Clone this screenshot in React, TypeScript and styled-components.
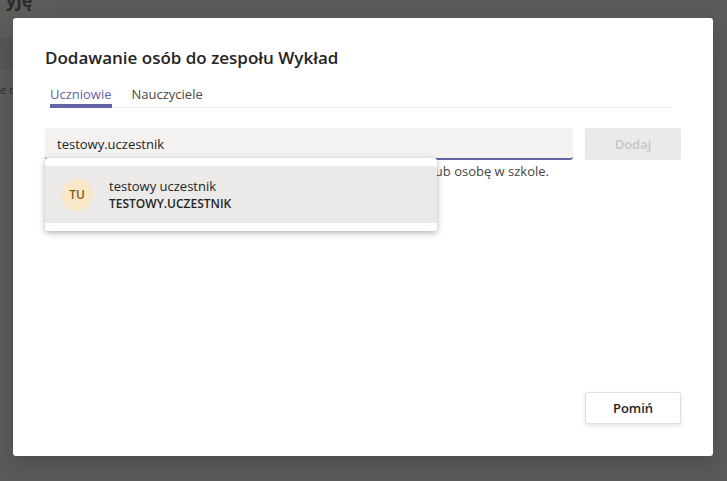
import React, { useState } from "react";
import styled, { createGlobalStyle } from "styled-components";

const GlobalStyle = createGlobalStyle`
  *, *::before, *::after { box-sizing: border-box; }
  body {
    margin: 0;
    color: #252423;
    background: #5b5a58;
    font: 400 13px/18px "Open Sans", "Noto Sans", sans-serif;
  }
  button, input { font: inherit; color: inherit; margin: 0; }
`;

const Page = styled.div`
  position: relative;
  display: flex;
  min-height: 100vh;
  padding: 18px 14px 25px 13px;
  overflow: hidden;
  background: #5b5a58;
`;

const Behind = styled.div`
  position: absolute;
  top: 0;
  left: 0;
  width: 52px;
  color: #2b2a29;
  overflow: hidden;
`;

const BehindTitle = styled.div`
  height: 38px;
  background: #5d5c5a;
  font-size: 18px;
  line-height: 0;
  font-weight: 700;
  text-indent: 6px;
`;

const BehindBand = styled.div`
  height: 32px;
  background: #575654;
`;

const BehindText = styled.div`
  height: 77px;
  padding-top: 12px;
  background: #5d5c5a;
  font-size: 11px;
  line-height: 16px;
`;

const Dialog = styled.section`
  position: relative;
  display: flex;
  flex: 1;
  flex-direction: column;
  padding: 28px 32px 32px;
  border-radius: 3px;
  background: #fff;
  box-shadow: 0 8px 20px rgba(0, 0, 0, 0.16);
`;

const Title = styled.h1`
  margin: 0;
  font-size: 17px;
  line-height: 24px;
  font-weight: 600;
`;

const Tabs = styled.div`
  display: flex;
  gap: 20px;
  margin: 14px 9px 0 5px;
  box-shadow: inset 0 -1px #f3f2f1;
`;

const Tab = styled.button<{ $active: boolean }>`
  height: 24px;
  padding: 0;
  border: 0;
  border-bottom: 4px solid ${(p) => (p.$active ? "#6264a7" : "transparent")};
  background: none;
  color: ${(p) => (p.$active ? "#6264a7" : "#484644")};
  line-height: 20px;
`;

const AddRow = styled.div`
  display: flex;
  gap: 12px;
  margin-top: 20px;
`;

const Field = styled.div`
  position: relative;
  flex: 1;
`;

const SearchInput = styled.input`
  display: block;
  width: 100%;
  height: 32px;
  padding: 2px 12px 0;
  border: 0;
  border-bottom: 2px solid #6264a7;
  border-radius: 3px;
  outline: 0;
  background: #f3f2f1;
`;

const Hint = styled.p`
  margin: 2px 0 0;
  padding-right: 24px;
  color: #484644;
  text-align: right;
  white-space: nowrap;
`;

const Menu = styled.ul`
  position: absolute;
  top: 30px;
  left: 0;
  width: 392px;
  max-width: 100%;
  margin: 0;
  padding: 8px 0;
  border-radius: 3px;
  background: #fff;
  box-shadow: 0 2px 6px rgba(0, 0, 0, 0.3);
  list-style: none;
`;

const Option = styled.li`
  display: flex;
  align-items: center;
  gap: 16px;
  height: 57px;
  padding: 0 16px;
  background: #ebeae9;
`;

const Avatar = styled.span`
  display: grid;
  place-items: center;
  width: 32px;
  height: 32px;
  border-radius: 50%;
  background: #f9e8c8;
  color: #835c1b;
  font-size: 12px;
  font-weight: 600;
`;

const Person = styled.span`
  display: flex;
  flex-direction: column;
`;

const Login = styled.strong`
  font-size: 12px;
  font-weight: 600;
`;

const Button = styled.button<{ $outlined?: boolean }>`
  width: 96px;
  height: 32px;
  border: 1px solid ${(p) => (p.$outlined ? "#e1dfdd" : "#ebeae9")};
  border-radius: 2px;
  background: ${(p) => (p.$outlined ? "#fff" : "#ebeae9")};
  box-shadow: ${(p) => (p.$outlined ? "0 2px 4px rgba(0, 0, 0, 0.1)" : "none")};
  font-weight: 600;
  &:disabled { color: #c8c6c4; }
`;

const Footer = styled.footer`
  display: flex;
  justify-content: flex-end;
  margin-top: auto;
`;

const tabs = ["Uczniowie", "Nauczyciele"];

export default function App() {
  const [active, setActive] = useState(tabs[0]);
  const [query, setQuery] = useState("testowy.uczestnik");
  return (
    <Page>
      <GlobalStyle />
      <Behind aria-hidden="true">
        <BehindTitle>yję</BehindTitle>
        <BehindBand />
        <BehindText>e do</BehindText>
      </Behind>
      <Dialog role="dialog" aria-labelledby="dialog-title">
        <Title id="dialog-title">Dodawanie osób do zespołu Wykład</Title>
        <Tabs role="tablist">
          {tabs.map((name) => (
            <Tab
              key={name}
              type="button"
              role="tab"
              aria-selected={name === active}
              $active={name === active}
              onClick={() => setActive(name)}
            >
              {name}
            </Tab>
          ))}
        </Tabs>
        <AddRow>
          <Field>
            <SearchInput
              type="text"
              aria-label="Nazwa osoby lub grupy"
              aria-describedby="hint"
              value={query}
              onChange={(e) => setQuery(e.target.value)}
            />
            <Hint id="hint">
              Zacznij wpisywać nazwę, aby wybrać grupę, listę dystrybucyjną lub osobę w szkole.
            </Hint>
            <Menu role="listbox" aria-label="Sugestie">
              <Option role="option" aria-selected="true">
                <Avatar>TU</Avatar>
                <Person>
                  <span>testowy uczestnik</span>
                  <Login>TESTOWY.UCZESTNIK</Login>
                </Person>
              </Option>
            </Menu>
          </Field>
          <Button type="button" disabled>Dodaj</Button>
        </AddRow>
        <Footer>
          <Button type="button" $outlined>Pomiń</Button>
        </Footer>
      </Dialog>
    </Page>
  );
}
